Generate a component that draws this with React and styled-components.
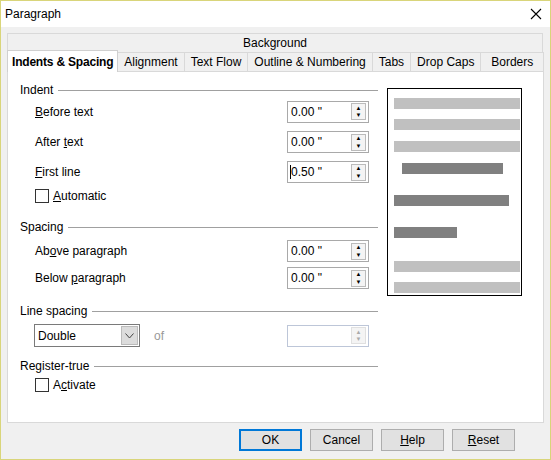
import React from "react";
import styled, { createGlobalStyle, css } from "styled-components";

const G = createGlobalStyle`
  html,body{margin:0;padding:0;}
  body{font-family:"Liberation Sans",Arial,sans-serif;font-size:12px;color:#000;}
`;
const Win = styled.div`
  width:551px;height:460px;box-sizing:border-box;border:1px solid #d9d57a;background:#f0f0f0;
  display:flex;flex-direction:column;
`;
const Title = styled.div`
  height:26px;background:#fff;display:flex;align-items:center;justify-content:space-between;padding:0 8px 0 4px;font-size:12px;
`;
const Body = styled.div`padding:6px 6px 0 6px;display:flex;flex-direction:column;`;
const TabRow = styled.div`display:flex;height:19px;${p=>p.top&&css`margin:0 1px;`}`;
const Tab = styled.div`
  flex:${p=>p.grow?1:"none"};padding:0 6px;display:flex;align-items:center;justify-content:center;
  border:1px solid #d9d9d9;border-bottom:none;margin-left:-1px;background:#f0f0f0;
  ${p=>p.active&&css`background:#fff;font-weight:bold;height:21px;margin-top:-2px;border-color:#d0d0d0;z-index:1;padding:0 4px;letter-spacing:-0.2px;`}
`;
const Panel = styled.div`
  background:#fff;border:1px solid #d9d9d9;height:352px;box-sizing:border-box;display:flex;padding:10px 0 0 12px;
`;
const Left = styled.div`width:358px;display:flex;flex-direction:column;`;
const Section = styled.div`display:flex;align-items:center;gap:5px;height:16px;&::after{content:"";flex:1;border-top:1px solid #a0a0a0;}`;
const Row = styled.div`display:flex;align-items:center;height:${p=>p.h||29}px;padding-left:15px;`;
const Label = styled.div`width:252px;`;
const Spin = styled.div`
  width:82px;height:22px;box-sizing:border-box;border:1px solid ${p=>p.dis?"#bdc6d8":"#a9a9a9"};display:flex;align-items:center;padding-left:3px;
  ${p=>p.dis&&css`background:#fff;`}
`;
const SpinText = styled.div`flex:1;`;
const Arrows = styled.div`width:15px;height:17px;margin-right:2px;display:flex;flex-direction:column;border:1px solid ${p=>p.dis?"#e0e0e0":"#bbb"};background:#f4f4f4;box-sizing:border-box;`;
const Arr = styled.div`flex:1;display:flex;align-items:center;justify-content:center;font-size:6px;line-height:1;color:${p=>p.dis?"#aaa":"#000"};`;
const Check = styled.div`width:12px;height:12px;border:1px solid #333;margin-right:4px;background:#fff;`;
const Combo = styled.div`width:106px;height:23px;box-sizing:border-box;border:1px solid #7a7a7a;display:flex;align-items:center;padding-left:3px;`;
const ComboBtn = styled.div`margin-left:auto;width:17px;height:19px;margin-right:1px;background:#dcdcdc;border:1px solid #bbb;box-sizing:border-box;display:flex;align-items:center;justify-content:center;`;
const Preview = styled.div`
  margin-left:9px;margin-top:6px;width:135px;height:208px;box-sizing:border-box;border:1px solid #000;padding:9px 0 0 6px;display:flex;flex-direction:column;
`;
const Bar = styled.div`height:11px;background:${p=>p.dark?"#808080":"#c0c0c0"};width:${p=>p.w}px;margin-left:${p=>p.l||0}px;margin-top:${p=>p.t}px;`;
const Footer = styled.div`display:flex;justify-content:flex-end;gap:8px;padding:6px 35px 0 0;`;
const Btn = styled.div`
  width:63px;height:22px;box-sizing:border-box;border:1px solid ${p=>p.def?"#0078d7":"#adadad"};${p=>p.def&&css`box-shadow:inset 0 0 0 1px #0078d7;`}
  background:#e1e1e1;display:flex;align-items:center;justify-content:center;
`;
const U = styled.span`text-decoration:underline;`;

const SpinBox = ({v, dis, caret}) => (
  <Spin dis={dis}><SpinText>{caret && <span style={{borderLeft:"1px solid #000",marginLeft:-1}} />}{v}</SpinText>
    <Arrows dis={dis}><Arr dis={dis}>▲</Arr><Arr dis={dis}>▼</Arr></Arrows></Spin>
);

export default function App(){
  return <>
    <G/>
    <Win>
      <Title><span>Paragraph</span>
        <svg width="12" height="12" viewBox="0 0 12 12"><path d="M1 1L11 11M11 1L1 11" stroke="#000" strokeWidth="1.1"/></svg>
      </Title>
      <Body>
        <TabRow top><Tab grow>Background</Tab></TabRow>
        <TabRow>
          <Tab active style={{marginLeft:0}}>Indents &amp; Spacing</Tab>
          <Tab>Alignment</Tab><Tab>Text Flow</Tab><Tab>Outline &amp; Numbering</Tab>
          <Tab>Tabs</Tab><Tab>Drop Caps</Tab><Tab grow>Borders</Tab>
        </TabRow>
        <Panel>
          <Left>
            <Section>Indent</Section>
            <Row h={31} style={{marginTop:-2}}><Label><U>B</U>efore text</Label><SpinBox v='0.00 "'/></Row>
            <Row h={30}><Label>After <U>t</U>ext</Label><SpinBox v='0.00 "'/></Row>
            <Row h={30}><Label><U>F</U>irst line</Label><SpinBox v='0.50 "' caret/></Row>
            <Row h={18}><Check/><span><U>A</U>utomatic</span></Row>
            <div style={{height:14}}/>
            <Section>Spacing</Section>
            <Row h={28} style={{marginTop:2}}><Label>Ab<U>o</U>ve paragraph</Label><SpinBox v='0.00 "'/></Row>
            <Row h={26}><Label>Below <U>p</U>aragraph</Label><SpinBox v='0.00 "'/></Row>
            <div style={{height:12}}/>
            <Section>Line spacing</Section>
            <Row h={33} style={{paddingLeft:14}}>
              <Combo>Double<ComboBtn><svg width="9" height="6" viewBox="0 0 9 6"><path d="M0.5 0.5L4.5 5L8.5 0.5" fill="none" stroke="#444"/></svg></ComboBtn></Combo>
              <span style={{color:"#999",marginLeft:14,width:133}}>of</span>
              <SpinBox v="" dis/>
            </Row>
            <div style={{height:6}}/>
            <Section>Register-true</Section>
            <Row h={22}><Check/><span>A<U>c</U>tivate</span></Row>
          </Left>
          <Preview>
            <Bar w={126} t={0}/><Bar w={126} t={10}/><Bar w={126} t={11}/>
            <Bar dark w={101} l={8} t={11}/><Bar dark w={115} t={21}/><Bar dark w={63} t={21}/>
            <Bar w={126} t={23}/><Bar w={126} t={10}/>
          </Preview>
        </Panel>
      </Body>
      <Footer>
        <Btn def>OK</Btn><Btn>Cancel</Btn><Btn><U>H</U>elp</Btn><Btn><U>R</U>eset</Btn>
      </Footer>
    </Win>
  </>;
}
